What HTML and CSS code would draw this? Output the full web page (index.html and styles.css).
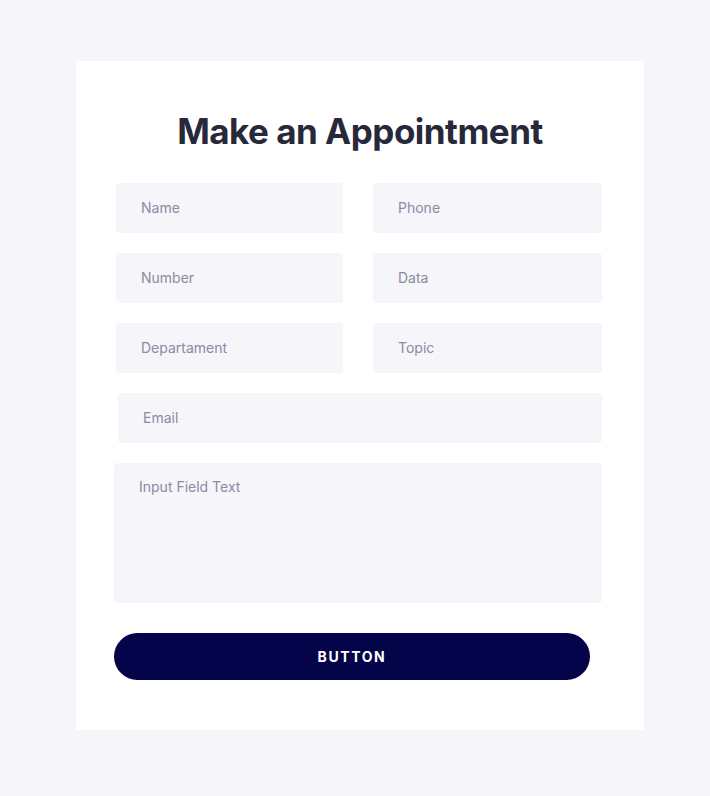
FILE: index.html
```html
<!DOCTYPE html>
<html>
<head>
<meta charset="utf-8">
<link rel="stylesheet" href="styles.css">
</head>
<body>
<div class="card">
  <h1 class="title">Make an Appointment</h1>
  <div class="grid">
    <div class="field">Name</div>
    <div class="field">Phone</div>
    <div class="field">Number</div>
    <div class="field">Data</div>
    <div class="field">Departament</div>
    <div class="field">Topic</div>
  </div>
  <div class="field email">Email</div>
  <div class="field area">Input Field Text</div>
  <div class="button">BUTTON</div>
</div>
</body>
</html>
```

FILE: styles.css
```css
html, body {
  margin: 0;
  padding: 0;
}
body {
  background: #f5f5fa;
  width: 710px;
  height: 796px;
  overflow: hidden;
}
.card {
  margin: 61px 0 0 76px;
  width: 568px;
  height: 669px;
  box-sizing: border-box;
  background: #ffffff;
  padding-top: 48px;
  display: flex;
  flex-direction: column;
}
.title {
  margin: 0;
  font-family: Inter, "Liberation Sans", sans-serif;
  font-weight: 700;
  font-size: 35px;
  line-height: 44px;
  color: #272839;
  text-align: center;
  letter-spacing: -0.5px;
}
.grid {
  margin: 30px 0 0 40px;
  display: grid;
  grid-template-columns: 227px 229px;
  column-gap: 30px;
  row-gap: 20px;
}
.field {
  height: 50px;
  background: #f5f5fa;
  border-radius: 4px;
  box-sizing: border-box;
  padding: 0 0 1px 25px;
  display: flex;
  align-items: center;
  font-family: Inter, "Open Sans", sans-serif;
  font-size: 14px;
  color: #8b8ba1;
}
.email {
  margin: 20px 0 0 42px;
  width: 484px;
}
.area {
  margin: 20px 0 0 38px;
  width: 488px;
  height: 140px;
  align-items: flex-start;
  padding-top: 15px;
}
.button {
  margin: 30px 0 0 38px;
  width: 476px;
  height: 47px;
  border-radius: 24px;
  background: #03044a;
  color: #ffffff;
  font-family: Inter, "Liberation Sans", sans-serif;
  font-weight: 700;
  font-size: 14px;
  letter-spacing: 1.6px;
  display: flex;
  align-items: center;
  justify-content: center;
}
```
